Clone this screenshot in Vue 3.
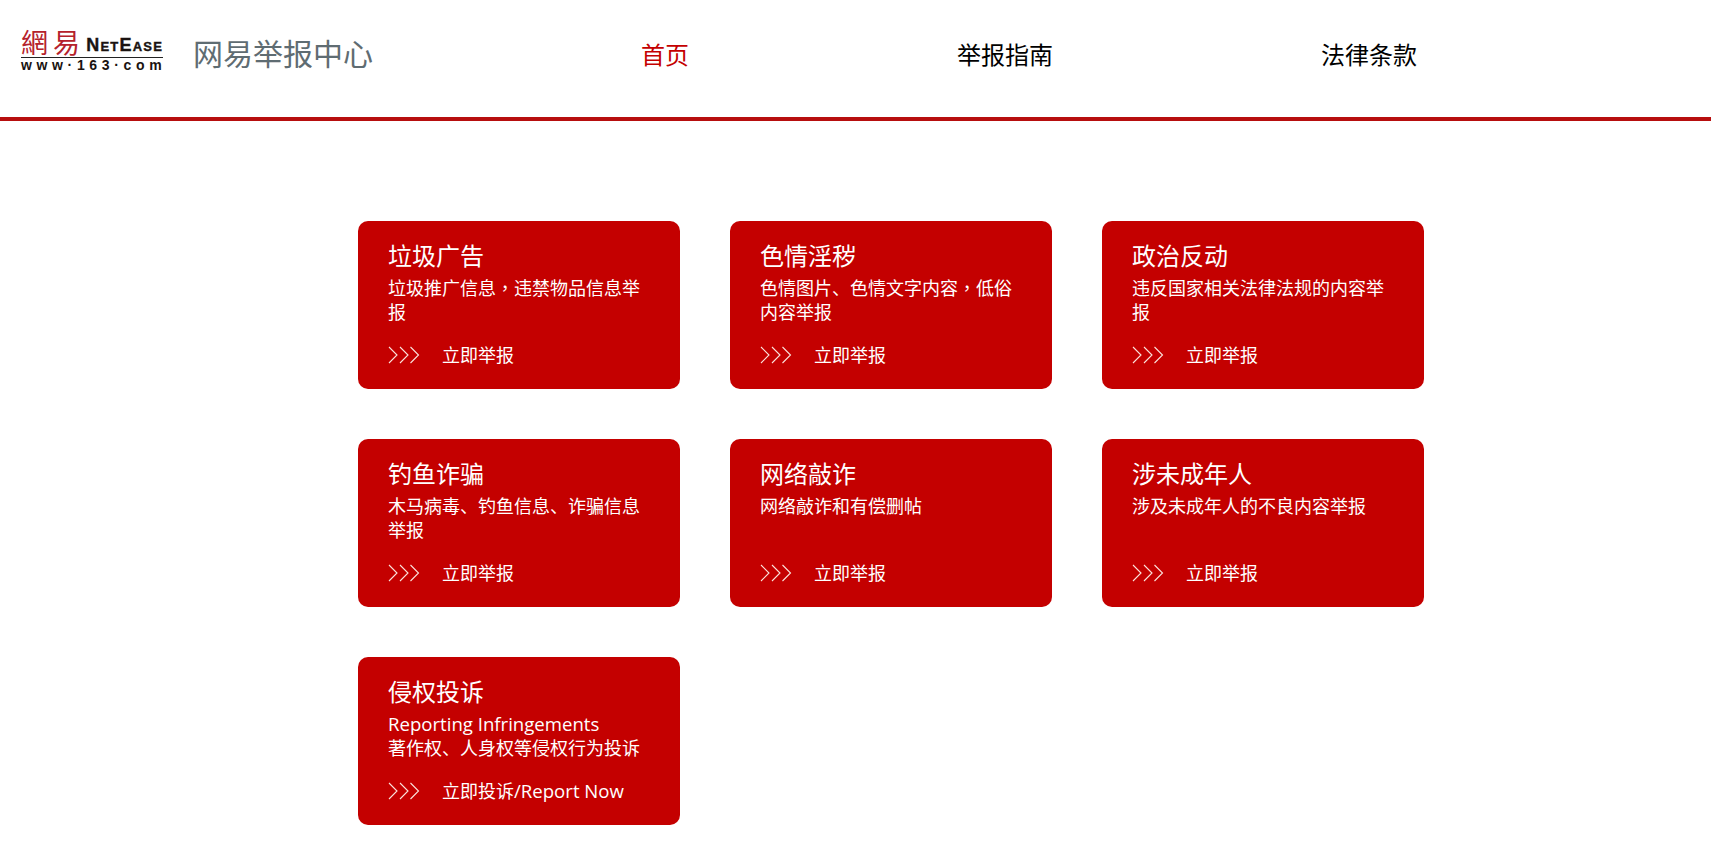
<script setup>
const cards = [
  { title: '垃圾广告', desc: ['垃圾推广信息，违禁物品信息举', '报'], link: '立即举报' },
  { title: '色情淫秽', desc: ['色情图片、色情文字内容，低俗', '内容举报'], link: '立即举报' },
  { title: '政治反动', desc: ['违反国家相关法律法规的内容举报'], link: '立即举报' },
  { title: '钓鱼诈骗', desc: ['木马病毒、钓鱼信息、诈骗信息举报'], link: '立即举报' },
  { title: '网络敲诈', desc: ['网络敲诈和有偿删帖'], link: '立即举报' },
  { title: '涉未成年人', desc: ['涉及未成年人的不良内容举报'], link: '立即举报' },
  { title: '侵权投诉', desc: ['Reporting Infringements', '著作权、人身权等侵权行为投诉'], link: '立即投诉/Report Now' }
]
const nav = [
  { label: '首页', active: true },
  { label: '举报指南', active: false },
  { label: '法律条款', active: false }
]
const parts = (text) => text.split(/(，|[A-Za-z/][A-Za-z /]*)/).filter(Boolean)
const partClass = (part) => ({ comma: part === '，', latin: /^[A-Za-z/]/.test(part) })
</script>

<template>
  <div class="page">
    <header class="header">
      <div class="logo">
        <div class="logo-top">
          <span class="logo-cn">網易</span>
          <span class="logo-en">NetEase</span>
        </div>
        <div class="logo-url">www·163·com</div>
      </div>
      <div class="site-title">网易举报中心</div>
      <nav class="nav">
        <a v-for="item in nav" :key="item.label" class="nav-item" :class="{ active: item.active }">{{ item.label }}</a>
      </nav>
    </header>
    <main class="grid">
      <section v-for="card in cards" :key="card.title" class="card">
        <h3 class="card-title">{{ card.title }}</h3>
        <div class="card-desc">
          <p v-for="line in card.desc" :key="line"><span v-for="(part, i) in parts(line)" :key="i" :class="partClass(part)">{{ part }}</span></p>
        </div>
        <div class="card-link">
          <svg class="arrows" width="32" height="18" viewBox="0 0 32 18" fill="none" stroke="#fbe3dc" stroke-width="1.1">
            <path d="M1 1l8 8-8 8" />
            <path d="M12 1l8 8-8 8" />
            <path d="M22.500 1l8 8-8 8" />
          </svg>
          <span><span v-for="(part, i) in parts(card.link)" :key="i" :class="partClass(part)">{{ part }}</span></span>
        </div>
      </section>
    </main>
  </div>
</template>

<style>
html, body { margin: 0; background: #fff; }
</style>

<style scoped>
.page {
  font-family: "Open Sans", "Noto Sans CJK SC", sans-serif;
  color: #000;
}
.header {
  display: flex;
  align-items: center;
  height: 117px;
  border-bottom: 4px solid #b70e0e;
  padding-left: 21px;
}
.logo {
  width: 142px;
  display: flex;
  flex-direction: column;
  align-self: flex-start;
  margin-top: 26px;
}
.logo-top {
  display: flex;
  align-items: flex-end;
  justify-content: space-between;
  border-bottom: 1px solid #222;
  height: 30px;
  padding-bottom: 1px;
}
.logo-cn {
  font-family: "Noto Sans CJK TC", sans-serif;
  font-size: 27px;
  line-height: 28px;
  color: #b5222c;
  letter-spacing: 5px;
  font-weight: 400;
  white-space: nowrap;
}
.logo-en {
  font-family: "Liberation Sans", sans-serif;
  font-weight: 700;
  font-size: 18px;
  line-height: 15px;
  font-variant: small-caps;
  letter-spacing: 1.2px;
  -webkit-text-stroke: 0.4px #1a1311;
  color: #1a1311;
  margin-bottom: 3px;
}
.logo-url {
  font-family: "Liberation Sans", sans-serif;
  font-weight: 700;
  font-size: 14px;
  line-height: 15px;
  letter-spacing: 4.65px;
  color: #1a1311;
  white-space: nowrap;
}
.site-title {
  margin: 0 0 10px 30px;
  font-size: 30px;
  line-height: 40px;
  color: #5f6c72;
  width: 448px;
  white-space: nowrap;
}
.nav {
  display: flex;
  gap: 268px;
  margin-bottom: 7px;
}
.nav-item {
  font-size: 24px;
  line-height: 32px;
  color: #000;
}
.nav-item.active {
  color: #c40000;
}
.grid {
  display: grid;
  grid-template-columns: repeat(3, 322px);
  gap: 50px;
  padding: 100px 0 0 358px;
}
.card {
  box-sizing: border-box;
  height: 168px;
  padding: 18px 30px 0;
  background: #c40000;
  border-radius: 10px;
  color: #fff;
  display: flex;
  flex-direction: column;
}
.card-title {
  margin: 0;
  font-size: 24px;
  line-height: 34px;
  font-weight: 400;
}
.card-desc {
  height: 48px;
  margin-top: 3px;
  font-size: 18px;
  line-height: 24px;
}
.card-desc p { margin: 0; }
.comma {
  font-family: "Noto Sans CJK TC", sans-serif;
  line-height: 1;
}
.latin {
  font-size: 18.6px;
  line-height: 1;
}
.card-link {
  display: flex;
  align-items: center;
  margin-top: 19px;
  font-size: 18px;
  line-height: 24px;
}
.arrows {
  margin-right: 22px;
}
</style>
